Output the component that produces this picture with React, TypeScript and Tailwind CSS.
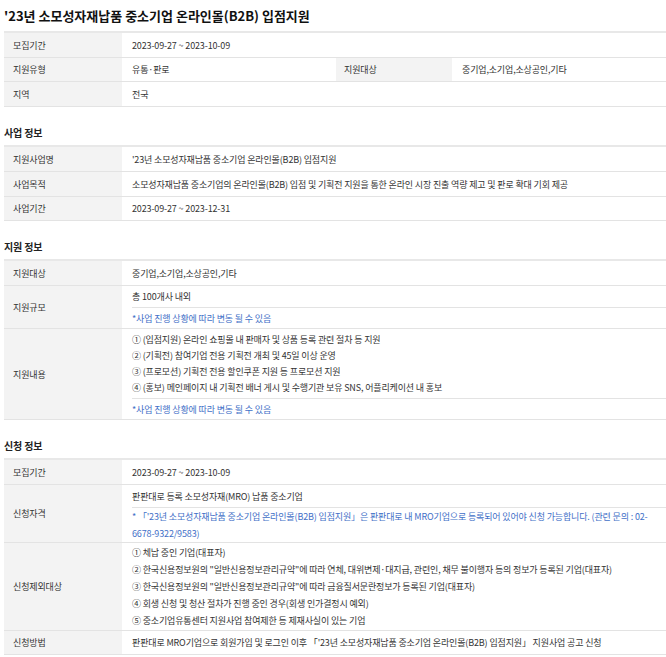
import React from "react";

const F = { fontFamily: '"Noto Sans CJK KR","Noto Sans",sans-serif' };

function Row({ label, children, h }: { label: string; children: React.ReactNode; h?: string }) {
  return (
    <div className={`grid grid-cols-[118px_1fr] border-b border-[#e3e3e3] ${h ?? ""}`}>
      <div className="bg-[#f3f3f3] flex items-center pl-[9px]">{label}</div>
      <div className="flex flex-col justify-center pl-[10px]">{children}</div>
    </div>
  );
}

function Sub({ children, last, h }: { children: React.ReactNode; last?: boolean; h?: string }) {
  return <div className={`flex flex-col justify-center ${h ?? ""} ${last ? "" : "border-b border-[#e3e3e3]"}`}>{children}</div>;
}

const Blue = ({ children }: { children: React.ReactNode }) => <span className="text-[#3f6fc7]">{children}</span>;

function Table({ children }: { children: React.ReactNode }) {
  return <div className="border-t-2 border-[#e8e8e8] ml-[4px]">{children}</div>;
}

const H = ({ children }: { children: React.ReactNode }) => (
  <div className="font-bold text-[10px] text-[#222] pl-[4px] pt-[18px] pb-[5px]">{children}</div>
);

export default function App() {
  return (
    <div style={F} className="w-[666px] bg-white text-[9px] tracking-[-0.15px] text-[#333] leading-[15px] pb-[4px]">
      <div className="font-bold text-[13px] tracking-normal text-[#111] pl-[4px] pt-[8px] pb-[8px]">'23년 소모성자재납품 중소기업 온라인몰(B2B) 입점지원</div>
      <Table>
        <Row label="모집기간" h="h-[25px]">2023-09-27 ~ 2023-10-09</Row>
        <div className="grid grid-cols-[118px_214px_116px_1fr] h-[24px] border-b border-[#e3e3e3]">
          <div className="bg-[#f3f3f3] flex items-center pl-[9px]">지원유형</div>
          <div className="flex items-center pl-[10px]">유통·판로</div>
          <div className="bg-[#f3f3f3] flex items-center pl-[8px]">지원대상</div>
          <div className="flex items-center pl-[10px]">중기업,소기업,소상공인,기타</div>
        </div>
        <Row label="지역" h="h-[25px]">전국</Row>
      </Table>
      <H>사업 정보</H>
      <Table>
        <Row label="지원사업명" h="h-[25px]">'23년 소모성자재납품 중소기업 온라인몰(B2B) 입점지원</Row>
        <Row label="사업목적" h="h-[25px]">소모성자재납품 중소기업의 온라인몰(B2B) 입점 및 기획전 지원을 통한 온라인 시장 진출 역량 제고 및 판로 확대 기회 제공</Row>
        <Row label="사업기간" h="h-[24px]">2023-09-27 ~ 2023-12-31</Row>
      </Table>
      <H>지원 정보</H>
      <Table>
        <Row label="지원대상" h="h-[25px]">중기업,소기업,소상공인,기타</Row>
        <Row label="지원규모">
          <Sub h="h-[22px]">총 100개사 내외</Sub>
          <Sub last h="h-[20px]"><Blue>*사업 진행 상황에 따라 변동 될 수 있음</Blue></Sub>
        </Row>
        <Row label="지원내용">
          <Sub h="h-[70px]">
            <div className="leading-[16px]">
              <div>① (입점지원) 온라인 쇼핑몰 내 판매자 및 상품 등록 관련 절차 등 지원</div>
              <div>② (기획전) 참여기업 전용 기획전 개최 및 45일 이상 운영</div>
              <div>③ (프로모션) 기획전 전용 할인쿠폰 지원 등 프로모션 지원</div>
              <div>④ (홍보) 메인페이지 내 기획전 배너 게시 및 수행기관 보유 SNS, 어플리케이션 내 홍보</div>
            </div>
          </Sub>
          <Sub last h="h-[20px]"><Blue>*사업 진행 상황에 따라 변동 될 수 있음</Blue></Sub>
        </Row>
      </Table>
      <H>신청 정보</H>
      <Table>
        <Row label="모집기간" h="h-[25px]">2023-09-27 ~ 2023-10-09</Row>
        <Row label="신청자격">
          <Sub h="h-[23px]">판판대로 등록 소모성자재(MRO) 납품 중소기업</Sub>
          <Sub last h="h-[34px]"><div className="leading-[17px] pr-[2px]"><Blue>* 「'23년 소모성자재납품 중소기업 온라인몰(B2B) 입점지원」은 판판대로 내 MRO기업으로 등록되어 있어야 신청 가능합니다. (관련 문의 : 02-6678-9322/9583)</Blue></div></Sub>
        </Row>
        <Row label="신청제외대상" h="h-[88px]">
          <div className="leading-[17px]">
            <div>① 체납 중인 기업(대표자)</div>
            <div>② 한국신용정보원의 "일반신용정보관리규약"에 따라 연체, 대위변제·대지급, 관련인, 채무 불이행자 등의 정보가 등록된 기업(대표자)</div>
            <div>③ 한국신용정보원의 "일반신용정보관리규약"에 따라 금융질서문란정보가 등록된 기업(대표자)</div>
            <div>④ 회생 신청 및 청산 절차가 진행 중인 경우(회생 인가결정시 예외)</div>
            <div>⑤ 중소기업유통센터 지원사업 참여제한 등 제재사실이 있는 기업</div>
          </div>
        </Row>
        <Row label="신청방법" h="h-[24px]">판판대로 MRO기업으로 회원가입 및 로그인 이후 「'23년 소모성자재납품 중소기업 온라인몰(B2B) 입점지원」 지원사업 공고 신청</Row>
      </Table>
    </div>
  );
}
